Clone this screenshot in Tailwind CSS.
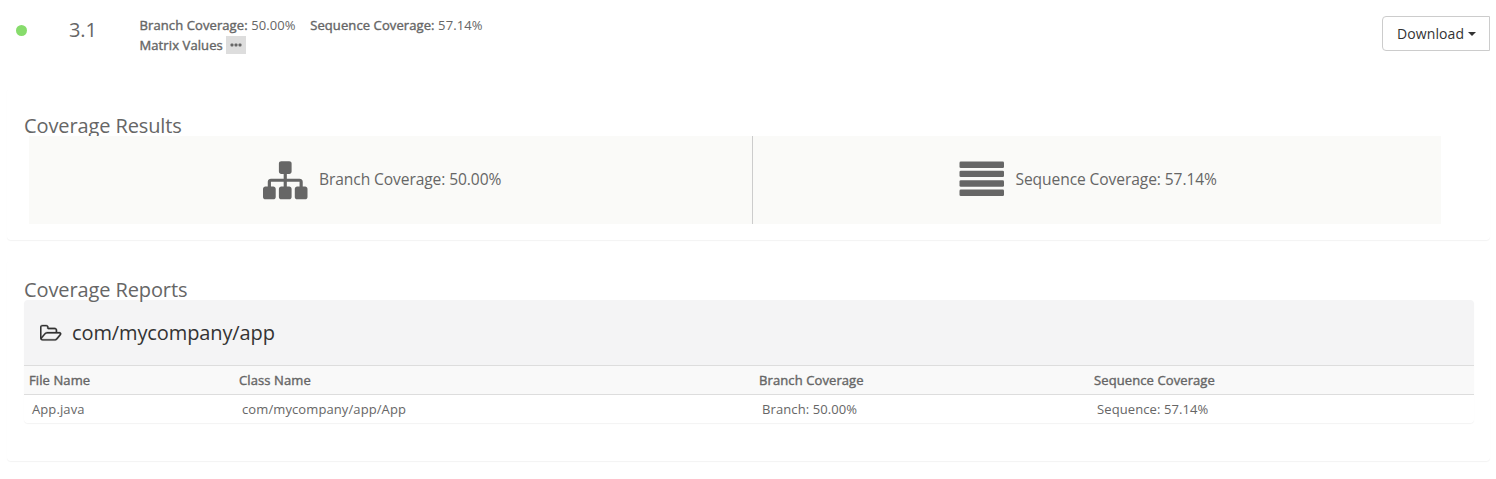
<!DOCTYPE html>
<html lang="en">
<head>
<meta charset="utf-8">
<title>Coverage</title>
<script src="https://cdn.jsdelivr.net/npm/@tailwindcss/browser@4"></script>
</head>
<body class="h-[479px] overflow-hidden bg-white font-['Open_Sans',sans-serif] text-[13px] leading-5 tracking-[0.1px] text-[#666]">
<header class="flex h-[88px] items-start pr-[6px] pl-[15.5px]">
  <span class="mt-[24.5px] size-[11.5px] rounded-full bg-[#87dc6c]"></span>
  <span class="mt-[15px] ml-[42px] w-[70.5px] text-xl leading-[30px] tracking-[-0.11px]">3.1</span>
  <div class="mt-[15px]">
    <div class="flex gap-[14.5px] whitespace-pre"><span><span class="[-webkit-text-stroke:0.4px]">Branch Coverage:</span> 50.00%</span><span><span class="[-webkit-text-stroke:0.4px]">Sequence Coverage:</span> 57.14%</span></div>
    <div class="flex items-center gap-[3px]"><span class="[-webkit-text-stroke:0.4px]">Matrix Values</span>
      <span class="flex h-[18px] w-5 items-center justify-center bg-[#ddd]"><svg width="12" height="4" viewBox="0 0 12 4" fill="#666"><rect x=".5" y=".5" width="3" height="3" rx="1"/><rect x="4.500" y=".5" width="3" height="3" rx="1"/><rect x="8.500" y=".5" width="3" height="3" rx="1"/></svg></span>
    </div>
  </div>
  <button class="mt-4 ml-auto flex h-[35px] w-[108px] items-center rounded-l-[4px] border border-[#ccc] pl-[14px] text-sm leading-5 text-[#333]">Download<svg class="ml-1" width="8" height="4" viewBox="0 0 8 4" fill="#333"><path d="M0 0h8L4 4z"/></svg></button>
</header>
<main class="pr-[6px] pl-[7px]">
  <section class="h-[152px] rounded-[4px] bg-white pt-6 pr-4 pl-[17px] shadow-[0_1px_1px_rgba(0,0,0,0.05)]">
    <h2 class="h-6 text-xl leading-7 tracking-[-0.11px]">Coverage Results</h2>
    <div class="relative ml-[5px] flex h-[88px] w-[1412px] bg-[#fafaf8] text-[15.6px] tracking-[-0.1px]">
      <div class="flex w-[724px] items-start border-r border-[#ccc] pl-[234px]">
        <svg class="mt-[22px]" width="44.500" height="44.500" viewBox="0 0 1792 1792" fill="#666"><path d="M1792 1248v320q0 40-28 68t-68 28h-320q-40 0-68-28t-28-68v-320q0-40 28-68t68-28h96v-192h-512v192h96q40 0 68 28t28 68v320q0 40-28 68t-68 28h-320q-40 0-68-28t-28-68v-320q0-40 28-68t68-28h96v-192h-512v192h96q40 0 68 28t28 68v320q0 40-28 68t-68 28h-320q-40 0-68-28t-28-68v-320q0-40 28-68t68-28h96v-192q0-52 38-90t90-38h512v-192h-96q-40 0-68-28t-28-68v-320q0-40 28-68t68-28h320q40 0 68 28t28 68v320q0 40-28 68t-68 28h-96v192h512q52 0 90 38t38 90v192h96q40 0 68 28t28 68z"/></svg>
        <span class="mt-[33px] ml-[11.5px]">Branch Coverage: 50.00%</span>
      </div>
      <div class="flex items-start pl-[206px]">
        <svg class="mt-[25px]" width="45" height="36" viewBox="0 0 45 36" fill="#666"><rect x=".5" y=".6" width="44.500" height="6.400" rx="1.300"/><rect x=".5" y="9.800" width="44.500" height="6.300" rx="1.300"/><rect x=".5" y="19.200" width="44.500" height="6.600" rx="1.300"/><rect x=".5" y="28.600" width="44.500" height="6.400" rx="1.300"/></svg>
        <span class="mt-[33px] ml-[11.5px]">Sequence Coverage: 57.14%</span>
      </div>
    </div>
  </section>
  <section class="mt-5 h-[201px] rounded-[4px] bg-white pt-4 pr-4 pl-[17px] shadow-[0_1px_1px_rgba(0,0,0,0.05)]">
    <h2 class="relative h-6 text-xl leading-7 tracking-[-0.11px]">Coverage Reports</h2>
    <div class="w-[1450px] rounded-[4px] shadow-[0_1px_1px_rgba(0,0,0,0.05)]">
      <div class="flex h-[65px] items-center gap-[10px] rounded-t-[4px] bg-[#f4f4f5] pl-4 text-xl tracking-[-0.11px] text-[#333]">
        <svg class="h-5 w-[22px]" viewBox="0 90 1971 1792" fill="#333" stroke="#333" stroke-width="24"><path d="M1781 1061q0-35-53-35h-1088q-40 0-85.500 21.500t-71.500 52.500l-294 363q-18 24-18 40 0 35 53 35h1088q40 0 86-22t71-53l294-363q18-22 18-39zm-1141-163h768v-160q0-40-28-68t-68-28h-576q-40 0-68-28t-28-68v-64q0-40-28-68t-68-28h-320q-40 0-68 28t-28 68v853l256-315q44-53 116-87.500t140-34.500zm1269 163q0 62-46 120l-295 363q-43 53-116 87.500t-140 34.500h-1088q-92 0-158-66t-66-158v-960q0-92 66-158t158-66h320q92 0 158 66t66 158v32h544q92 0 158 66t66 158v160h192q54 0 99 24.500t67 70.500q15 32 15 68z"/></svg>
        <span>com/mycompany/app</span>
      </div>
      <div class="grid h-[30px] grid-cols-[210px_520px_335px_1fr] items-center border-y border-[#ddd] bg-[#f9f9f9] pl-[5px] [-webkit-text-stroke:0.4px]">
        <span>File Name</span><span>Class Name</span><span>Branch Coverage</span><span>Sequence Coverage</span>
      </div>
      <div class="grid h-7 grid-cols-[210px_520px_335px_1fr] items-center pl-2">
        <span>App.java</span><span>com/mycompany/app/App</span><span>Branch: 50.00%</span><span>Sequence: 57.14%</span>
      </div>
    </div>
  </section>
</main>
</body>
</html>
